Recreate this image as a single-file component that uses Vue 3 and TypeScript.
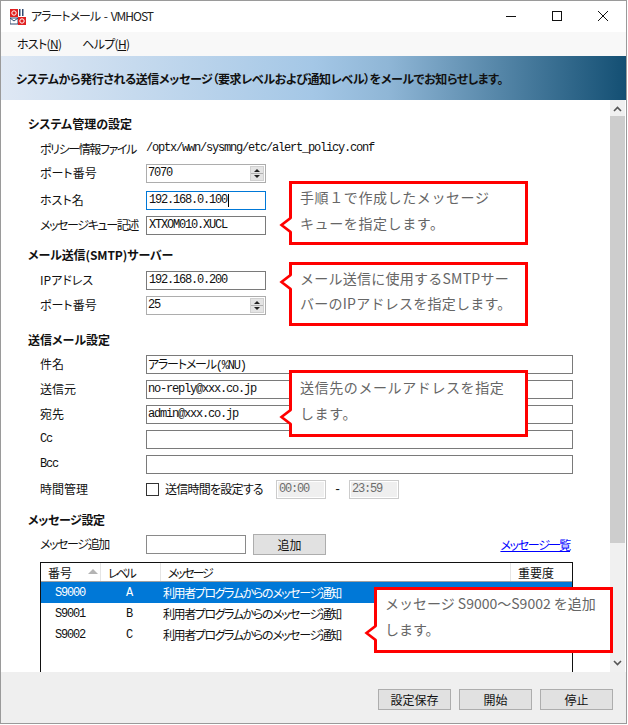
<script setup lang="ts">
interface Callout { cls: string; lines: string[] }
const callouts: Callout[] = [
  { cls: 'c1', lines: ['手順１で作成したメッセージ', 'キューを指定します。'] },
  { cls: 'c2', lines: ['メール送信に使用するSMTPサー', 'バーのIPアドレスを指定します。'] },
  { cls: 'c3', lines: ['送信先のメールアドレスを指定', 'します。'] },
  { cls: 'c4', lines: ['メッセージ S9000～S9002 を追加', 'します。'] },
]
const rows = [
  { id: 'S9000', lv: 'A', sel: true },
  { id: 'S9001', lv: 'B', sel: false },
  { id: 'S9002', lv: 'C', sel: false },
]
</script>

<template>
  <div class="win">
    <header class="title">
      <svg class="appicon" width="16" height="16" viewBox="0 0 16 16">
        <rect x="0" y="0" width="8" height="8" fill="#e02020" />
        <circle cx="4" cy="4" r="2.2" fill="none" stroke="#fff" />
        <rect x="9" y="0" width="1.5" height="7" fill="#304a70" />
        <rect x="12" y="0" width="1.5" height="7" fill="#304a70" />
        <rect x="0" y="9" width="8" height="6" fill="#fff" stroke="#304a70" />
        <path d="M0 9l4 3 4-3" fill="none" stroke="#304a70" />
        <rect x="8" y="8" width="8" height="8" fill="#e02020" />
        <circle cx="12" cy="12" r="2.2" fill="none" stroke="#fff" />
      </svg>
      <span class="title-text">アラートメール - VMHOST</span>
      <div class="winbtns">
        <svg width="12" height="12" viewBox="0 0 12 12"><path d="M1 6.5h10" stroke="#111" /></svg>
        <svg width="12" height="12" viewBox="0 0 12 12"><rect x="1.5" y="1.5" width="9" height="9" fill="none" stroke="#111" /></svg>
        <svg width="12" height="12" viewBox="0 0 12 12"><path d="M1 1l10 10M11 1L1 11" stroke="#111" /></svg>
      </div>
    </header>
    <nav class="menu">
      <span>ホスト(<u>N</u>)</span>
      <span>ヘルプ(<u>H</u>)</span>
    </nav>
    <div class="banner">システムから発行される送信メッセージ（要求レベルおよび通知レベル）をメールでお知らせします。</div>

    <div class="body">
      <main class="form">
        <h3 class="h-first">システム管理の設定</h3>
        <div class="row r-text">
          <label class="tight">ポリシー情報ファイル</label>
          <span class="mono">/optx/wwn/sysmng/etc/alert_policy.conf</span>
        </div>
        <div class="row r-port">
          <label>ポート番号</label>
          <div class="field w120 light mono">7070
            <span class="spin"><i class="up"></i><i class="down"></i></span>
          </div>
        </div>
        <div class="row r-host">
          <label>ホスト名</label>
          <div class="field w120 focus mono pad">192.168.0.100<span class="caret"></span></div>
        </div>
        <div class="row">
          <label class="tight">メッセージキュー記述</label>
          <div class="field w120 mono pad">XTXOM010.XUCL</div>
        </div>

        <h3 class="h-mail">メール送信(SMTP)サーバー</h3>
        <div class="row">
          <label>IPアドレス</label>
          <div class="field w120 mono pad">192.168.0.200</div>
        </div>
        <div class="row">
          <label>ポート番号</label>
          <div class="field w120 light mono">25
            <span class="spin"><i class="up"></i><i class="down"></i></span>
          </div>
        </div>

        <h3 class="h-send">送信メール設定</h3>
        <div class="row">
          <label>件名</label>
          <div class="field full mono">アラートメール(%NU)</div>
        </div>
        <div class="row">
          <label>送信元</label>
          <div class="field full mono">no-reply@xxx.co.jp</div>
        </div>
        <div class="row">
          <label>宛先</label>
          <div class="field full mono">admin@xxx.co.jp</div>
        </div>
        <div class="row">
          <label class="lat">Cc</label>
          <div class="field full"></div>
        </div>
        <div class="row">
          <label class="lat">Bcc</label>
          <div class="field full"></div>
        </div>
        <div class="row r-time">
          <label>時間管理</label>
          <span class="check"></span>
          <span class="check-label">送信時間を設定する</span>
          <div class="field time mono">00:00</div>
          <span class="dash">-</span>
          <div class="field time mono">23:59</div>
        </div>

        <h3 class="h-msg">メッセージ設定</h3>
        <div class="row r-add">
          <label class="tight">メッセージ追加</label>
          <div class="field w100"></div>
          <button class="btn add">追加</button>
          <a class="link">メッセージ一覧</a>
        </div>

        <section class="list">
          <div class="lhead">
            <span class="hc c-no">番号<i class="sort"></i></span>
            <span class="hc c-lv">レベル</span>
            <span class="hc c-msg">メッセージ</span>
            <span class="hc c-imp">重要度</span>
          </div>
          <div v-for="r in rows" :key="r.id" class="lrow" :class="{ sel: r.sel }">
            <span class="d-no mono">{{ r.id }}</span>
            <span class="d-lv mono">{{ r.lv }}</span>
            <span class="d-msg">利用者プログラムからのメッセージ通知</span>
          </div>
        </section>
      </main>

      <aside class="scroll">
        <svg class="sarrow" width="9" height="6" viewBox="0 0 9 6"><path d="M1 5l3.5-3.5L8 5" fill="none" stroke="#555" stroke-width="1.6" /></svg>
        <div class="thumb"></div>
        <svg class="sarrow bottom" width="9" height="6" viewBox="0 0 9 6"><path d="M1 1l3.5 3.5L8 1" fill="none" stroke="#555" stroke-width="1.6" /></svg>
      </aside>
    </div>

    <footer class="foot">
      <button class="btn">設定保存</button>
      <button class="btn">開始</button>
      <button class="btn">停止</button>
    </footer>

    <div v-for="c in callouts" :key="c.cls" class="callout" :class="c.cls">
      <svg class="tail" width="14" height="20" viewBox="0 0 14 20">
        <path d="M14 3H11.5L2.5 10l9 7H14z" fill="#fff" />
        <path d="M11.5 0v3L2.5 10l9 7v3" fill="none" stroke="#f00" stroke-width="2.6" />
      </svg>
      <p v-for="l in c.lines" :key="l">{{ l }}</p>
    </div>
  </div>
</template>

<style>
html, body { margin: 0; background: #fff; }
</style>

<style scoped>
.win {
  position: relative;
  box-sizing: border-box;
  width: 627px;
  height: 724px;
  border: 1px solid #9a9a9a;
  display: flex;
  flex-direction: column;
  font: 12px "Noto Sans CJK JP", sans-serif;
  font-feature-settings: "palt";
  color: #111;
  background: #fff;
  overflow: hidden;
}
.mono { font-family: "Liberation Mono", "Noto Sans CJK JP", monospace; letter-spacing: -1.2px; font-size: 12px; }
.title { height: 31px; display: flex; align-items: center; flex: none; padding-left: 9px; }
.appicon { flex: none; }
.title-text { margin-left: 5px; color: #222; margin-top: -2px; letter-spacing: -1px; word-spacing: 2px; white-space: pre; }
.winbtns { margin-left: auto; display: flex; gap: 34px; margin-right: 17px; margin-top: -2px; }
.menu { height: 24px; flex: none; background: #f8f8f8; display: flex; align-items: center; gap: 21px; padding-left: 16px; padding-bottom: 2px; box-sizing: border-box; letter-spacing: -0.7px; }
.banner {
  height: 44px; flex: none; display: flex; align-items: center; padding-left: 15px;
  font-weight: 700; white-space: nowrap; letter-spacing: -0.4px;
  background: linear-gradient(90deg, #dfe8f4 0%, #a4c7e6 50%, #8fb6d6 62%, #134f73 100%);
}
.body { height: 572px; flex: none; display: flex; overflow: hidden; }
.form { flex: none; width: 609px; padding-left: 27px; box-sizing: border-box; }
h3 { margin: 0; font-size: 12px; font-weight: 700; line-height: 18px; }
.h-first { margin-top: 15px; }
.h-mail { margin-top: 11px; letter-spacing: -0.1px; }
.h-send { margin-top: 16px; }
.h-msg { margin-top: 12px; letter-spacing: -0.4px; }
.row { display: flex; align-items: center; height: 19px; margin-top: 6px; padding-left: 12px; }
.row label { width: 106px; flex: none; white-space: nowrap; margin-top: -2px; }
.row label.tight { letter-spacing: -1.4px; }
.row label.lat { font-family: "Liberation Mono", monospace; letter-spacing: -1.2px; }
.r-text { height: 30px; margin-top: 0; }
.r-text label { margin-top: 0; }
.r-port { margin-top: 1px; }
.r-host { margin-top: 8px; }
.h-mail + .row { margin-top: 7px; }
.field { box-sizing: border-box; height: 19px; border: 1px solid #7a7a7a; background: #fff; display: flex; align-items: center; padding-left: 1px; padding-bottom: 1px; white-space: nowrap; position: relative; }
.pad { padding-left: 2px; }
.w120 { width: 120px; }
.w100 { width: 100px; border-color: #8a8a8a; }
.full { width: 427px; }
.light { border-color: #adadad; }
.focus { border-color: #0078d7; }
.caret { width: 1px; height: 13px; background: #000; margin-left: 1px; }
.spin { position: absolute; right: 1px; top: 1px; width: 14px; height: 15px; background: #e4e4e4; display: flex; flex-direction: column; align-items: center; justify-content: space-around; border: 1px solid #d0d0d0; box-sizing: border-box; }
.spin::after { content: ""; position: absolute; left: 0; right: 0; top: 6px; height: 1px; background: #b0b0b0; }
.spin i { width: 0; height: 0; border-left: 3px solid transparent; border-right: 3px solid transparent; }
.spin .up { border-bottom: 3px solid #222; }
.spin .down { border-top: 3px solid #222; }
.check { width: 13px; height: 13px; box-sizing: border-box; border: 1px solid #333; flex: none; }
.check-label { margin-left: 6px; width: 111px; white-space: nowrap; letter-spacing: -0.75px; margin-top: -2px; }
.time { width: 50px; background: #efefef; border: 1px solid #ccc; outline: 1px solid #fff; outline-offset: -2px; color: #6d6d6d; padding-left: 2px; }
.dash { width: 23px; text-align: center; font-family: "Liberation Mono", monospace; }
.btn { box-sizing: border-box; width: 73px; height: 21px; padding: 0; border: 1px solid #adadad; background: #e1e1e1; font: 12px "Noto Sans CJK JP", sans-serif; color: #111; }
.add { margin-left: 7px; }
.link { margin-left: auto; margin-right: 40px; color: #00f; text-decoration: underline; white-space: nowrap; letter-spacing: -1.3px; }
.list { position: relative; margin: 8px 0 0 12px; width: 533px; height: 120px; box-sizing: border-box; border: 1px solid #111; border-bottom: 0; }
.lhead { height: 18px; display: flex; align-items: center; border-bottom: 1px solid #a0a0a0; }
.hc { box-sizing: border-box; height: 100%; display: flex; align-items: center; padding-left: 7px; border-right: 1px solid #e5e5e5; white-space: nowrap; position: relative; }
.c-no { width: 60px; }
.c-lv { width: 60px; letter-spacing: -2.5px; }
.c-msg { width: 351px; letter-spacing: -2.2px; }
.c-imp { width: 61px; border-right: 0; }
.sort { position: absolute; left: 47px; top: 6px; width: 0; height: 0; border-left: 5px solid transparent; border-right: 5px solid transparent; border-bottom: 5px solid #b4b4b4; }
.lrow { height: 21px; display: flex; align-items: center; }
.sel { background: #0078d7; color: #fff; }
.d-no { width: 85px; padding-left: 14px; box-sizing: border-box; }
.d-lv { width: 37px; }
.d-msg { white-space: nowrap; letter-spacing: -1.4px; }
.scroll { width: 15px; flex: none; background: #f0f0f0; position: relative; }
.sarrow { display: block; position: absolute; left: 3px; top: 6px; }
.sarrow.bottom { top: auto; bottom: 6px; }
.thumb { position: absolute; top: 16px; left: 0; width: 15px; height: 427px; background: #cdcdcd; }
.foot { flex: 1; background: #efefef; display: flex; justify-content: flex-end; align-items: flex-start; gap: 8px; padding: 17px 13px 0 0; }
.callout { position: absolute; box-sizing: border-box; width: 239px; border: 3px solid #f00; background: #fff; padding-left: 8px; color: #666; font-size: 14px; line-height: 26px; font-feature-settings: normal; }
.callout p { margin: 0; white-space: nowrap; }
.tail { position: absolute; left: -13px; }
.c1 { left: 288px; top: 180px; height: 64px; letter-spacing: 0.6px; }
.c1 .tail { top: 31px; }
.c2 { left: 288px; top: 261px; height: 64px; line-height: 25px; padding-top: 1px; letter-spacing: 0.25px; }
.c2 .tail { top: 7px; }
.c3 { left: 288px; top: 369px; height: 67px; padding-top: 1px; letter-spacing: 0.6px; }
.c3 .tail { top: 34px; }
.c4 { left: 373px; top: 586px; height: 66px; }
.c4 .tail { top: 33px; }
</style>
